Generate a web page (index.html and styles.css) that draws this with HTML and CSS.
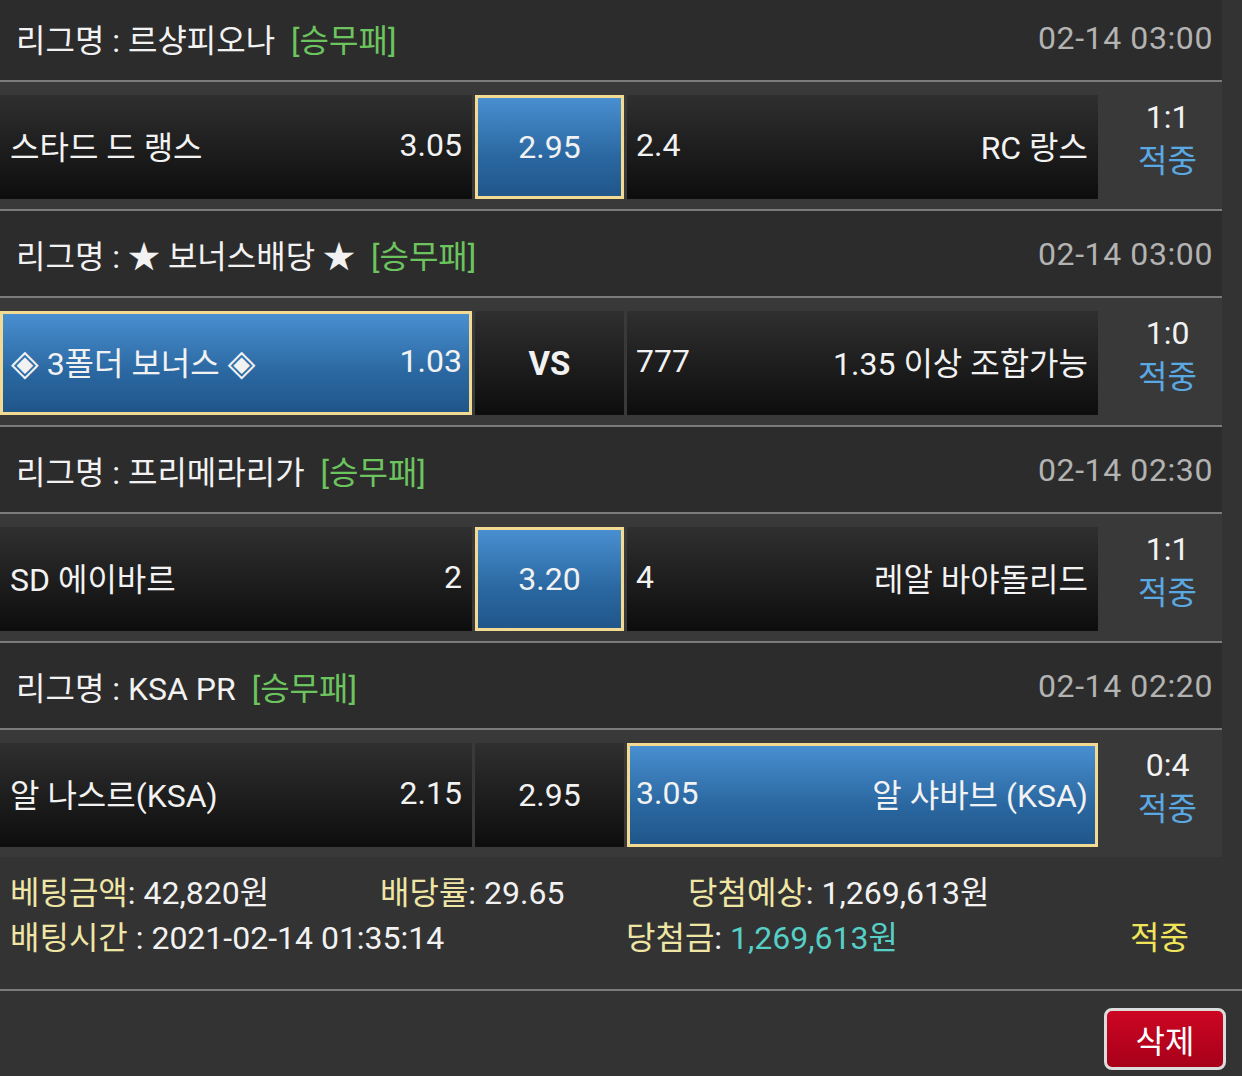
FILE: index.html
```html
<!DOCTYPE html>
<html>
<head>
    <title>베팅내역</title>
    <link rel="stylesheet" href="styles.css">
</head>
<body>
    <div class="slip">
        <div class="matches">
            <div class="match">
                <div class="league">
                    <span class="league-name">리그명 : 르샹피오나 <span class="bet-type">[승무패]</span></span>
                    <span class="kickoff">02-14 03:00</span>
                </div>
                <div class="match-row">
                    <div class="cell home"><span>스타드 드 랭스</span><span>3.05</span></div>
                    <div class="cell draw selected">2.95</div>
                    <div class="cell away"><span>2.4</span><span>RC 랑스</span></div>
                    <div class="result"><span class="score">1:1</span><span class="hit">적중</span></div>
                </div>
            </div>

            <div class="match">
                <div class="league">
                    <span class="league-name">리그명 : ★ 보너스배당 ★ <span class="bet-type">[승무패]</span></span>
                    <span class="kickoff">02-14 03:00</span>
                </div>
                <div class="match-row">
                    <div class="cell home selected"><span><span class="gem">◈</span> 3폴더 보너스 <span class="gem">◈</span></span><span>1.03</span></div>
                    <div class="cell draw vs">VS</div>
                    <div class="cell away"><span>777</span><span>1.35 이상 조합가능</span></div>
                    <div class="result"><span class="score">1:0</span><span class="hit">적중</span></div>
                </div>
            </div>

            <div class="match">
                <div class="league">
                    <span class="league-name">리그명 : 프리메라리가 <span class="bet-type">[승무패]</span></span>
                    <span class="kickoff">02-14 02:30</span>
                </div>
                <div class="match-row">
                    <div class="cell home"><span>SD 에이바르</span><span>2</span></div>
                    <div class="cell draw selected">3.20</div>
                    <div class="cell away"><span>4</span><span>레알 바야돌리드</span></div>
                    <div class="result"><span class="score">1:1</span><span class="hit">적중</span></div>
                </div>
            </div>

            <div class="match">
                <div class="league">
                    <span class="league-name">리그명 : KSA PR <span class="bet-type">[승무패]</span></span>
                    <span class="kickoff">02-14 02:20</span>
                </div>
                <div class="match-row">
                    <div class="cell home"><span>알 나스르(KSA)</span><span>2.15</span></div>
                    <div class="cell draw">2.95</div>
                    <div class="cell away selected"><span>3.05</span><span>알 샤바브 (KSA)</span></div>
                    <div class="result"><span class="score">0:4</span><span class="hit">적중</span></div>
                </div>
            </div>
        </div>

        <div class="summary">
            <div class="summary-line first">
                <span><span class="label">베팅금액</span>: 42,820원</span>
                <span><span class="label">배당률</span>: 29.65</span>
                <span><span class="label">당첨예상</span>: 1,269,613원</span>
            </div>
            <div class="summary-line second">
                <span><span class="label">배팅시간</span> : 2021-02-14 01:35:14</span>
                <span><span class="label">당첨금</span>: <span class="payout">1,269,613원</span></span>
                <span class="status">적중</span>
            </div>
        </div>

        <div class="actions">
            <button type="button" class="delete-btn">삭제</button>
        </div>
    </div>
</body>
</html>
```

FILE: styles.css
```css
body {
    margin: 0;
    background: #333;
    color: #f2f2f2;
    font-family: Roboto, "Noto Sans CJK KR", "DejaVu Sans", sans-serif;
    font-size: 32px;
    overflow: hidden;
}
.slip {
    width: 1242px;
}
.matches {
    width: 1222px;
    margin-top: -5px;
}
.league {
    height: 87px;
    background: #2c2c2c;
    border-bottom: 2px solid #7b7b7b;
    display: flex;
    justify-content: space-between;
    align-items: center;
    padding: 0 9px 0 16px;
    box-sizing: border-box;
}
.bet-type {
    color: #6cc45e;
    margin-left: 8px;
}
.kickoff {
    color: #b3b3b3;
    letter-spacing: 0.6px;
}
.match-row {
    background: #393939;
    border-bottom: 2px solid #7b7b7b;
    padding: 13px 0 10px;
    display: grid;
    grid-template-columns: 472px 149px 471px 1fr;
    column-gap: 3px;
    height: 104px;
}
.match:last-child .match-row {
    border-bottom: none;
}
.cell {
    background: linear-gradient(#2f2f2f, #0d0d0d);
    display: flex;
    align-items: center;
    justify-content: space-between;
    padding: 0 10px 4px;
    white-space: nowrap;
}
.cell.away {
    padding-left: 9px;
}
.cell.draw {
    justify-content: center;
    padding: 0;
}
.cell.selected {
    background: linear-gradient(#4a91d3, #2a67a0 60%, #1f5588);
    box-shadow: inset 0 0 0 3px #f2da92;
}
.cell.home.selected {
    padding-left: 11px;
}
.gem {
    font-size: 36px;
}
.vs {
    font-weight: bold;
    font-size: 33px;
    padding-bottom: 2px;
}
.result {
    display: flex;
    flex-direction: column;
    align-items: center;
    padding-left: 12px;
    line-height: 44px;
}
.hit {
    color: #5aa9e2;
}
.summary {
    height: 134px;
    box-sizing: border-box;
    padding-top: 14px;
    border-bottom: 2px solid #7b7b7b;
}
.summary-line {
    display: grid;
    padding-left: 10px;
    line-height: 45px;
    white-space: nowrap;
}
.summary-line.first {
    grid-template-columns: 370px 308px 1fr;
}
.summary-line.second {
    grid-template-columns: 616px 504px 1fr;
}
.label {
    color: #efe6a6;
}
.payout {
    color: #56cfc6;
}
.status {
    color: #f0e45a;
}
.actions {
    display: flex;
    justify-content: flex-end;
    padding: 17px 16px 0 0;
}
.delete-btn {
    width: 122px;
    height: 62px;
    background: linear-gradient(#cc0622, #a8001a);
    border: 3px solid #dcdcdc;
    border-radius: 8px;
    color: #fff;
    font-family: Roboto, "Noto Sans CJK KR", sans-serif;
    font-size: 32px;
    cursor: pointer;
}
```
